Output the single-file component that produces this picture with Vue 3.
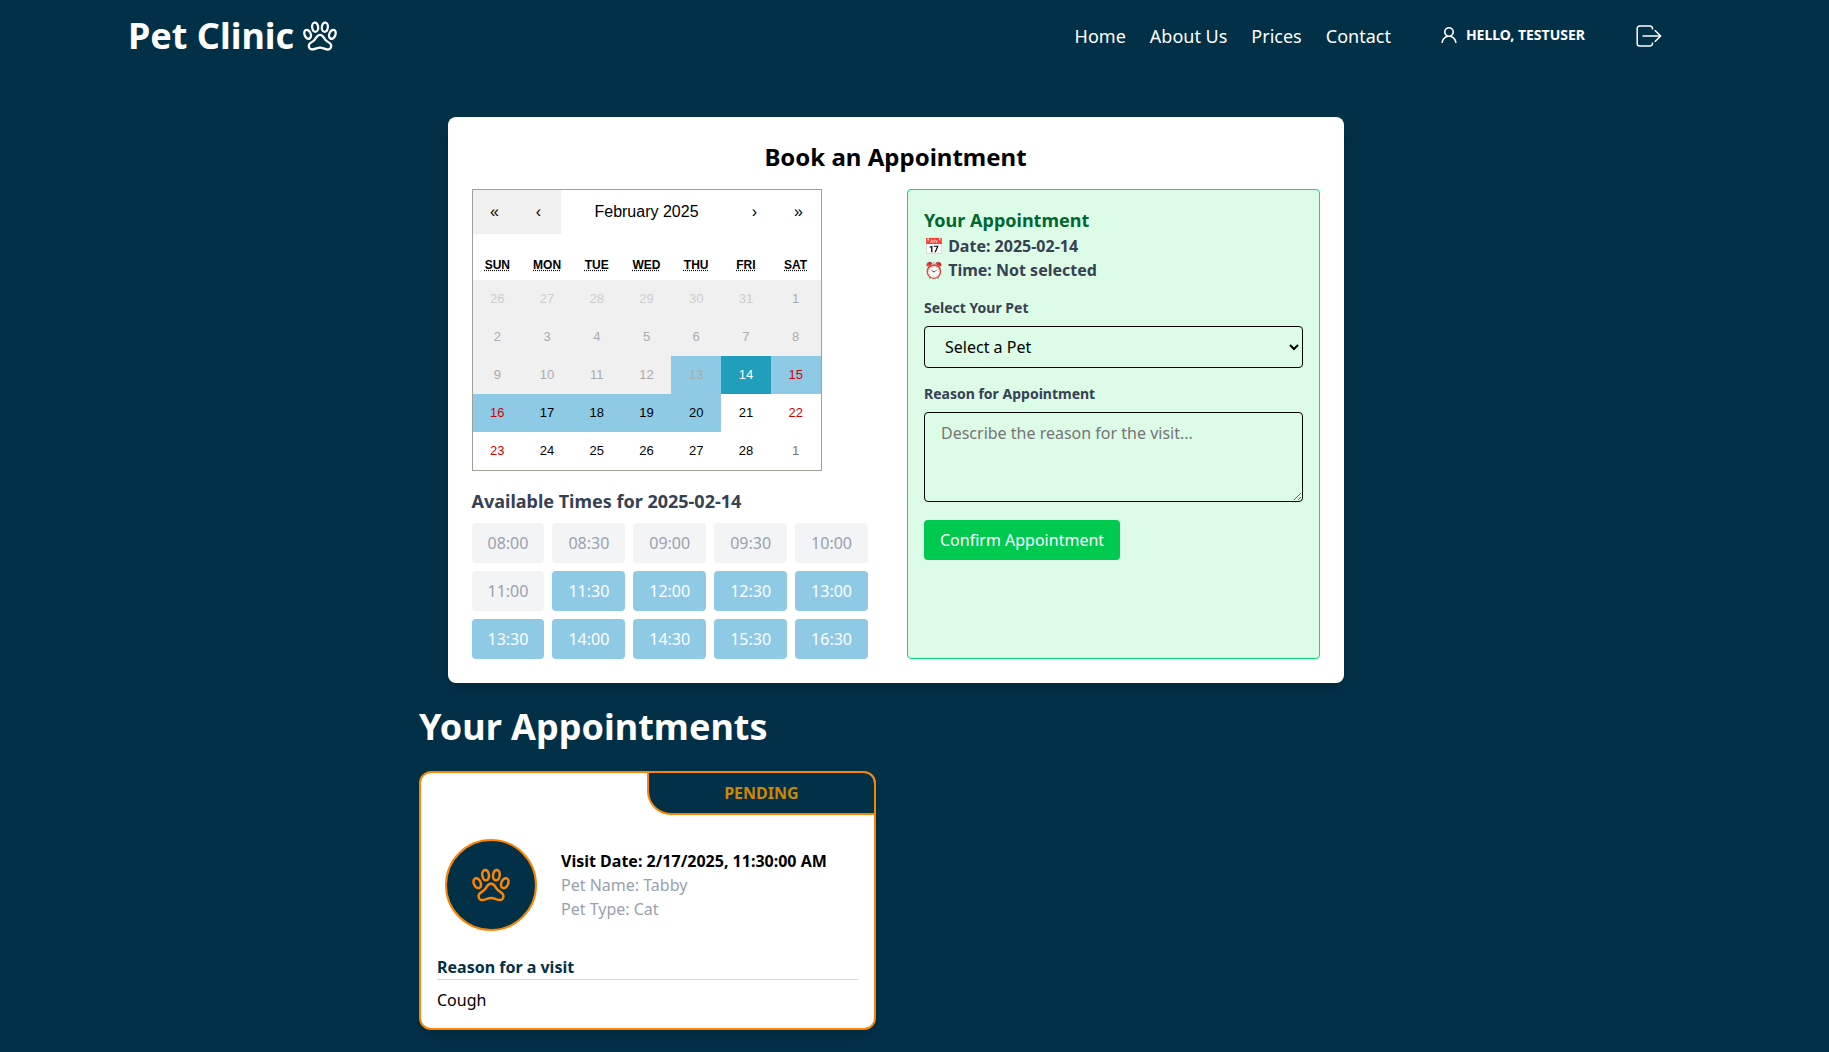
<script setup>
import { ref } from 'vue'

const pawPath =
  'M457.74 170.1a30.26 30.26 0 00-11.16-2.1h-.4c-20.17.3-42.79 19.19-54.66 47.76-14.23 34.18-7.68 69.15 14.74 78.14a30.21 30.21 0 0011.15 2.1c20.27 0 43.2-19 55.17-47.76 14.13-34.18 7.48-69.15-14.84-78.14zM327.6 303.48C299.8 257.35 287.8 240 256 240s-43.9 17.46-71.7 63.48c-23.8 39.36-71.9 42.64-83.9 76.07a50.91 50.91 0 00-3.6 19c0 27.19 20.8 49.44 46.4 49.44 31.8 0 75.1-25.39 112.9-25.39S337 448 368.8 448c25.6 0 46.3-22.25 46.3-49.44a51 51 0 00-3.7-19c-12-33.53-60-36.72-83.8-76.08zM192.51 196a26.53 26.53 0 004-.3c23.21-3.37 37.7-35.53 32.44-71.85C224 89.61 203.22 64 181.49 64a26.53 26.53 0 00-4 .3c-23.21 3.37-37.7 35.53-32.44 71.85C150 170.29 170.78 196 192.51 196zM366.92 136.15c5.26-36.32-9.23-68.48-32.44-71.85a26.53 26.53 0 00-4-.3c-21.73 0-42.51 25.61-47.47 59.85-5.26 36.32 9.23 68.48 32.44 71.85a26.53 26.53 0 004 .3c21.74 0 42.55-25.71 47.47-59.85zM105.77 293.9c22.39-9 28.93-44 14.72-78.14C108.53 187 85.62 168 65.38 168a30.21 30.21 0 00-11.15 2.1c-22.39 9-28.93 44-14.72 78.14C51.47 277 74.38 296 94.62 296a30.21 30.21 0 0011.15-2.1z'

const links = ['Home', 'About Us', 'Prices', 'Contact']

const weekdays = [
  ['SUN', 'Sunday'],
  ['MON', 'Monday'],
  ['TUE', 'Tuesday'],
  ['WED', 'Wednesday'],
  ['THU', 'Thursday'],
  ['FRI', 'Friday'],
  ['SAT', 'Saturday'],
]

// Thirty-five days starting on Sunday, January 26th 2025
const days = Array.from({ length: 35 }, (_, i) => {
  const date = new Date(2025, 0, 26 + i)
  const neighbour = date.getMonth() !== 1
  const day = date.getDate()
  return {
    day,
    key: i,
    disabled: i < 19,
    classes: {
      weekend: i % 7 === 0 || i % 7 === 6,
      neighbour,
      open: !neighbour && day >= 13 && day <= 20,
      active: !neighbour && day === 14,
    },
  }
})

const times = [
  '08:00', '08:30', '09:00', '09:30', '10:00',
  '11:00', '11:30', '12:00', '12:30', '13:00',
  '13:30', '14:00', '14:30', '15:30', '16:30',
].map((label, i) => ({ label, taken: i < 6 }))

const selectedTime = ref('')
const pet = ref('')
const reason = ref('')
</script>

<template>
  <div class="page">
    <header class="topbar">
      <a class="logo" href="#">
        Pet Clinic
        <svg class="logo-paw" viewBox="0 0 512 512" aria-hidden="true"><path class="paw" :d="pawPath" /></svg>
      </a>
      <div class="topbar-right">
        <nav class="links">
          <a v-for="link in links" :key="link" href="#">{{ link }}</a>
        </nav>
        <a class="user" href="#">
          <svg viewBox="64 64 896 896" width="18" height="18" fill="currentColor" aria-hidden="true">
            <path d="M858.5 763.6a374 374 0 0 0-80.6-119.5 375.63 375.63 0 0 0-119.5-80.6c-.4-.2-.8-.3-1.2-.5C719.5 518 760 444.7 760 362c0-137-111-248-248-248S264 225 264 362c0 82.7 40.5 156 102.8 201.1-.4.2-.8.3-1.2.5-44.8 18.9-85 46-119.5 80.6a375.63 375.63 0 0 0-80.6 119.5A371.7 371.7 0 0 0 136 901.8a8 8 0 0 0 8 8.2h60c4.4 0 7.900-3.500 8-7.800 2-77.2 33-149.500 87.800-204.300 56.700-56.700 132-87.900 212.200-87.900s155.500 31.200 212.200 87.900C779 752.700 810 825 812 902.200c.1 4.400 3.600 7.800 8 7.800h60a8 8 0 0 0 8-8.200c-1-47.800-10.900-94.300-29.500-138.200zM512 534c-45.900 0-89.100-17.900-121.600-50.400S340 407.900 340 362c0-45.900 17.900-89.100 50.400-121.600S466.100 190 512 190s89.100 17.900 121.600 50.400S684 316.100 684 362c0 45.900-17.900 89.100-50.400 121.600S557.900 534 512 534z" />
          </svg>
          HELLO, TESTUSER
        </a>
        <button class="logout" type="button" aria-label="Log out">
          <svg viewBox="0 0 26 22" width="26" height="22" aria-hidden="true">
            <path d="M16.5 4.500V3.500a2.500 2.500 0 0 0-2.500-2.500H3.500A2.300 2.300 0 0 0 1.200 3.300v15.400A2.300 2.300 0 0 0 3.500 21H14a2.500 2.500 0 0 0 2.500-2.500V17.500M18.800 5.200 24.600 11 18.800 16.800" />
            <path class="shaft" d="M6.500 11H24" />
          </svg>
        </button>
      </div>
    </header>

    <main>
      <section class="booking">
        <h2>Book an Appointment</h2>
        <div class="booking-columns">
          <div class="schedule">
            <div class="calendar">
              <div class="calendar-nav">
                <button type="button" disabled aria-label="Previous year">«</button>
                <button type="button" disabled aria-label="Previous month">‹</button>
                <button class="month" type="button">February 2025</button>
                <button type="button" aria-label="Next month">›</button>
                <button type="button" aria-label="Next year">»</button>
              </div>
              <div class="weekdays">
                <div v-for="[short, full] in weekdays" :key="short"><abbr :title="full">{{ short }}</abbr></div>
              </div>
              <div class="days">
                <button v-for="d in days" :key="d.key" type="button" :class="d.classes" :disabled="d.disabled">
                  {{ d.day }}
                </button>
              </div>
            </div>
            <h3 class="times-title">Available Times for 2025-02-14</h3>
            <div class="times">
              <button
                v-for="t in times"
                :key="t.label"
                type="button"
                :disabled="t.taken"
                @click="selectedTime = t.label"
              >{{ t.label }}</button>
            </div>
          </div>

          <form class="summary" @submit.prevent>
            <h3>Your Appointment</h3>
            <p>📅 Date: 2025-02-14</p>
            <p>⏰ Time: {{ selectedTime || 'Not selected' }}</p>
            <label for="pet">Select Your Pet</label>
            <select id="pet" v-model="pet">
              <option value="">Select a Pet</option>
              <option value="tabby">Tabby</option>
            </select>
            <label for="reason">Reason for Appointment</label>
            <textarea id="reason" v-model="reason" rows="3" placeholder="Describe the reason for the visit..."></textarea>
            <button class="confirm" type="submit">Confirm Appointment</button>
          </form>
        </div>
      </section>

      <section class="appointments">
        <h2>Your Appointments</h2>
        <div class="cards">
          <article class="card">
            <div class="status">PENDING</div>
            <div class="visit">
              <div class="avatar">
                <svg viewBox="0 0 512 512" width="40" height="40" aria-hidden="true"><path class="paw" :d="pawPath" /></svg>
              </div>
              <div>
                <p class="visit-date">Visit Date: 2/17/2025, 11:30:00 AM</p>
                <p>Pet Name: Tabby</p>
                <p>Pet Type: Cat</p>
              </div>
            </div>
            <div class="details">
              <h3>Reason for a visit</h3>
              <p>Cough</p>
            </div>
          </article>
        </div>
      </section>
    </main>
  </div>
</template>

<style>
body {
  margin: 0;
  background: #023047;
}
</style>

<style scoped>
* {
  box-sizing: border-box;
}

.page {
  font-family: "Noto Sans", sans-serif;
  font-size: 16px;
  line-height: 24px;
  color: #000;
}

h2,
h3,
p {
  margin: 0;
}

button,
select,
textarea {
  margin: 0;
  font: inherit;
  color: inherit;
}

button {
  border: 0;
  padding: 0;
  background: none;
}

a {
  color: inherit;
  text-decoration: none;
}

svg {
  display: block;
  flex: none;
}

.paw {
  fill: none;
  stroke: currentColor;
  stroke-width: 32;
}

.topbar {
  display: flex;
  align-items: center;
  justify-content: space-between;
  padding: 16px 7%;
  color: #fff;
}

.logo {
  display: flex;
  align-items: center;
  gap: 8px;
  font-size: 36px;
  line-height: 40px;
  font-weight: 700;
}

.logo-paw {
  width: 36px;
  height: 36px;
}

.topbar-right {
  display: flex;
  align-items: center;
  padding-right: 39px;
}

.links {
  display: flex;
  gap: 24px;
  font-size: 18px;
  line-height: 28px;
}

.user {
  display: flex;
  align-items: center;
  gap: 8px;
  margin: 0 51px 0 49px;
  padding-bottom: 2px;
  font-size: 14px;
  line-height: 20px;
  font-weight: 700;
}

.logout svg {
  fill: none;
  stroke: currentColor;
  stroke-width: 1.5;
}

.logout .shaft {
  stroke-width: 2;
  opacity: 0.75;
}

main {
  padding: 45px 38px 22px 0;
}

.booking {
  max-width: 896px;
  margin: 0 auto;
  padding: 24px;
  border-radius: 8px;
  background: #fff;
  box-shadow: 0 10px 15px -3px rgba(0, 0, 0, 0.1), 0 4px 6px -4px rgba(0, 0, 0, 0.1);
}

.booking h2 {
  margin-bottom: 16px;
  font-size: 24px;
  line-height: 32px;
  text-align: center;
}

.booking-columns {
  display: grid;
  grid-template-columns: 1fr 1fr;
  gap: 23px;
}

.schedule {
  padding-right: 16px;
}

.calendar {
  width: 350px;
  max-width: 100%;
  border: 1px solid #a0a096;
  background: #fff;
  font-family: "Liberation Sans", Arial, sans-serif;
}

.calendar-nav {
  display: flex;
  height: 44px;
  margin-bottom: 16px;
}

.calendar-nav button {
  width: 44px;
}

.calendar-nav button:disabled {
  background: #f0f0f0;
  color: #000;
}

.calendar-nav .month {
  flex: 1;
}

.weekdays,
.days {
  display: grid;
  grid-template-columns: repeat(7, 1fr);
}

.weekdays {
  font-size: 12px;
  line-height: 14px;
  font-weight: 700;
  text-align: center;
}

.weekdays div {
  padding: 8px;
}

.weekdays abbr {
  text-decoration: underline dotted;
}

.days button {
  height: 38px;
  font-size: 13px;
}

.days .weekend {
  color: #d10000;
}

.days .neighbour {
  color: #757575;
}

.days button:disabled {
  background: #f0f0f0;
  color: #ababab;
}

.days .neighbour:disabled {
  color: #cdcdcd;
}

.days .open,
.days .open:disabled {
  background: #8ecae6;
}

.days .active {
  background: #219ebc;
  color: #fff;
}

.times-title {
  margin: 16px 0 8px;
  font-size: 18px;
  line-height: 28px;
  color: #364153;
}

.times {
  display: grid;
  grid-template-columns: repeat(5, 1fr);
  gap: 8px;
}

.times button {
  height: 40px;
  border-radius: 4px;
  background: #8ecae6;
  color: #fff;
}

.times button:disabled {
  background: #f3f4f6;
  color: #99a1af;
}

.summary {
  padding: 16px;
  border: 1px solid #05df72;
  border-radius: 4px;
  background: #dcfce7;
  color: #364153;
}

.summary h3 {
  font-size: 18px;
  line-height: 28px;
  color: #016630;
}

.summary p {
  font-weight: 700;
}

.summary label {
  display: block;
  margin: 16px 0 8px;
  font-size: 14px;
  line-height: 20px;
  font-weight: 700;
}

.summary select,
.summary textarea {
  display: block;
  width: 100%;
  padding: 8px 16px;
  border: 1px solid #000;
  border-radius: 4px;
  background: transparent;
  color: #000;
}

.summary select {
  height: 42px;
}

.summary textarea {
  resize: vertical;
}

.summary textarea::placeholder {
  color: #757575;
}

.confirm {
  height: 40px;
  margin-top: 18px;
  padding: 0 16px;
  border-radius: 4px;
  background: #00c950;
  color: #fff;
}

.appointments {
  max-width: 953px;
  margin: 24px auto 0;
}

.appointments h2 {
  margin-bottom: 24px;
  font-size: 36px;
  line-height: 40px;
  color: #fff;
}

.cards {
  display: grid;
  grid-template-columns: 1fr 1fr;
  gap: 40px;
}

.card {
  overflow: hidden;
  border: 2px solid #fb8500;
  border-radius: 12px;
  background: #fff;
  box-shadow: 0 10px 15px -3px rgba(0, 0, 0, 0.1), 0 4px 6px -4px rgba(0, 0, 0, 0.1);
}

.status {
  width: 50%;
  margin-left: auto;
  padding: 8px;
  border: solid #fb8500;
  border-width: 0 0 2px 2px;
  border-bottom-left-radius: 24px;
  background: #023047;
  color: #d08700;
  font-weight: 700;
  text-align: center;
}

.visit {
  display: flex;
  align-items: center;
  gap: 24px;
  padding: 24px;
  color: #99a1af;
}

.avatar {
  padding: 24px;
  border: 2px solid #fb8500;
  border-radius: 50%;
  background: #023047;
  color: #fb8500;
}

.visit-date {
  color: #000;
  font-weight: 700;
}

.details {
  padding: 0 16px 16px;
}

.details h3 {
  margin-bottom: 8px;
  border-bottom: 1px solid #d1d5dc;
  font-size: 16px;
  line-height: 24px;
  color: #023047;
}
</style>
